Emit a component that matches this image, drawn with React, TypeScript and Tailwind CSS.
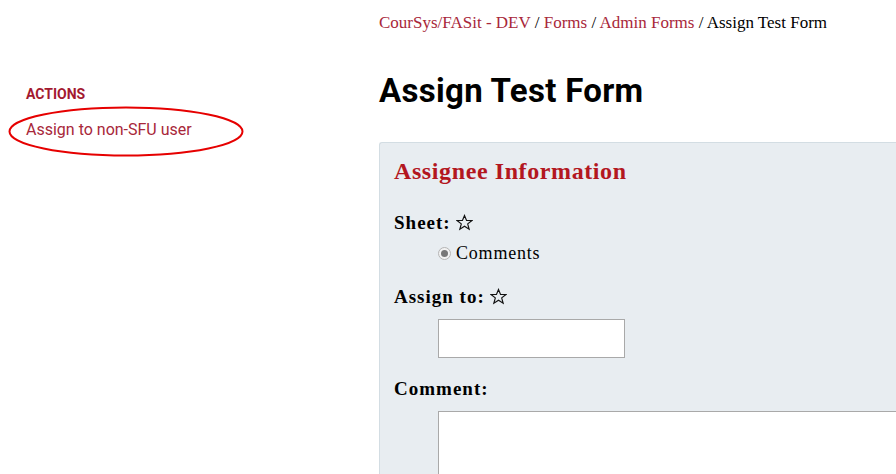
const serif = { fontFamily: '"Liberation Serif", Georgia, serif' };

function Req() {
  return (
    <svg className="ml-[5px]" width="17" height="17" viewBox="0 0 24 24">
      <polygon
        points="12,2 14.9,9 22.5,9.2 16.5,14 18.6,21.5 12,17.2 5.4,21.5 7.5,14 1.5,9.2 9.1,9"
        fill="none"
        stroke="#111"
        strokeWidth="1.6"
        strokeLinejoin="miter"
      />
    </svg>
  );
}

export default function App() {
  return (
    <div className="relative flex h-[474px] bg-white text-black overflow-hidden">
      {/* Sidebar */}
      <div className="w-[379px] shrink-0 pl-[26px] pt-[85px] font-['Roboto',sans-serif]">
        <h3 className="text-[14px] leading-[18px] font-bold text-[#a3192f]">ACTIONS</h3>
        <a href="#" className="block mt-[17px] text-[16px] leading-[20px] text-[#a8273a]">
          Assign to non-SFU user
        </a>
      </div>

      {/* Annotation ellipse */}
      <svg className="absolute left-[8px] top-[106px]" width="236" height="51" viewBox="0 0 236 51">
        <ellipse cx="118" cy="25.5" rx="116.5" ry="24" fill="none" stroke="#e60000" strokeWidth="2" />
      </svg>

      {/* Main */}
      <div className="flex-1 pt-[13px]">
        <nav className="text-[17px] leading-[20px]" style={serif}>
          <a href="#" className="text-[#a8273a]">CourSys/FASit - DEV</a> /{' '}
          <a href="#" className="text-[#a8273a]">Forms</a> /{' '}
          <a href="#" className="text-[#a8273a]">Admin Forms</a> / Assign Test Form
        </nav>
        <h1 className="mt-[41px] text-[33px] font-bold leading-none tracking-[0.3px] font-['Roboto',sans-serif]">
          Assign Test Form
        </h1>

        <div className="mt-[35px] bg-[#e8edf1] border border-[#d3dde3] border-r-0 rounded-tl-[3px] pl-[14px] pt-[14px] h-[400px]">
          <h2 className="text-[24px] leading-[28px] tracking-[0.6px] font-bold text-[#b3171f]" style={serif}>
            Assignee Information
          </h2>

          <div className="mt-[27px]" style={serif}>
            <div className="text-[19px] leading-[21px] tracking-[1px] font-bold flex items-center">
              Sheet:<Req />
            </div>
            <label className="mt-[10px] ml-[44px] flex items-center gap-[5px] text-[18px] leading-[21px] tracking-[0.8px]">
              <span className="w-[13px] h-[13px] rounded-full border border-[#b5b5b5] bg-[#f2f2f2] flex items-center justify-center">
                <span className="w-[7px] h-[7px] rounded-full bg-[#777]" />
              </span>
              Comments
            </label>

            <div className="mt-[22px] text-[19px] leading-[21px] tracking-[1px] font-bold flex items-center">
              Assign to:<Req />
            </div>
            <input className="mt-[12px] ml-[44px] block w-[187px] h-[39px] bg-white border border-[#a9a9a9]" />

            <div className="mt-[20px] text-[19px] leading-[21px] tracking-[1px] font-bold">Comment:</div>
            <textarea className="mt-[12px] ml-[44px] block w-[500px] h-[120px] bg-white border border-[#a9a9a9]" />
          </div>
        </div>
      </div>
    </div>
  );
}
